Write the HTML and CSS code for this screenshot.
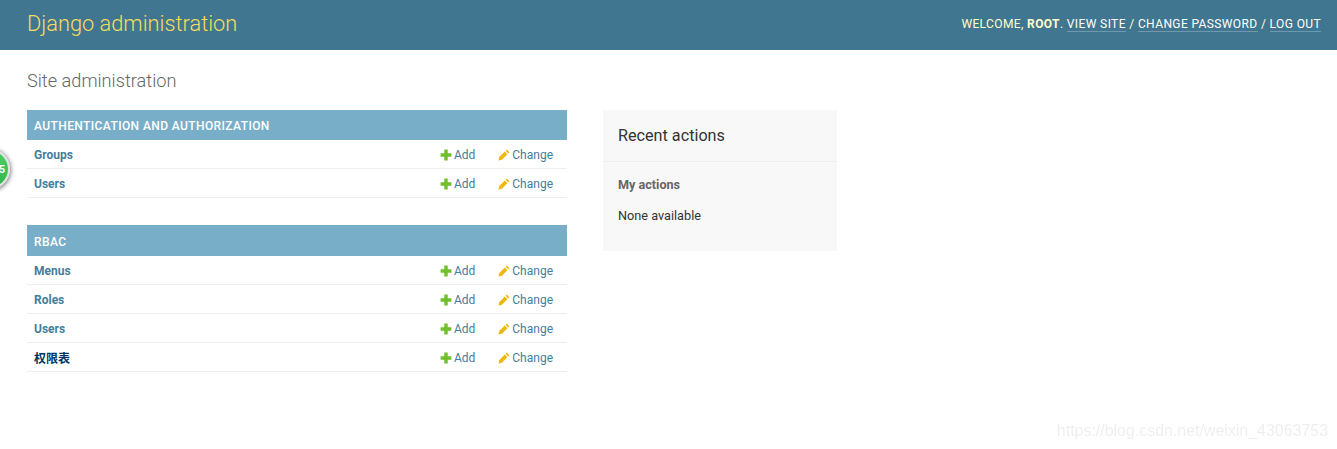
FILE: index.html
```html
<!DOCTYPE html>
<html lang="en">
<head>
    <meta charset="UTF-8">
    <meta name="viewport" content="width=device-width, initial-scale=1.0">
    <title>Site administration | Django site admin</title>
    <link rel="stylesheet" href="styles.css">
</head>
<body>

<svg class="sprites" width="0" height="0">
    <symbol id="plus" viewBox="0 0 12 12">
        <path d="M4.300.6h3.400v3.700h3.700v3.400H7.700v3.700H4.300V7.700H.6V4.300h3.700z" fill="#70bf2b"/>
    </symbol>
    <symbol id="pencil" viewBox="0 0 12 12">
        <path d="M8.800.6l2.600 2.600-1.200 1.200-2.600-2.600zM6.800 2.600l2.600 2.600-5.500 5.500-3.400.8.800-3.400z" fill="#efb80b"/>
    </symbol>
</svg>

<div class="header">
    <h1 class="branding">Django administration</h1>
    <div class="user-tools">
        Welcome, <strong>root</strong>. <a href="#">View site</a> / <a href="#">Change password</a> / <a href="#">Log out</a>
    </div>
</div>

<div class="content">
    <h2 class="page-title">Site administration</h2>
    <div class="columns">
        <div class="main">
            <div class="module">
                <div class="caption">Authentication and Authorization</div>
                <div class="row">
                    <a class="model" href="#">Groups</a>
                    <a class="action add" href="#"><svg class="icon"><use href="#plus"/></svg>Add</a>
                    <a class="action change" href="#"><svg class="icon"><use href="#pencil"/></svg>Change</a>
                </div>
                <div class="row">
                    <a class="model" href="#">Users</a>
                    <a class="action add" href="#"><svg class="icon"><use href="#plus"/></svg>Add</a>
                    <a class="action change" href="#"><svg class="icon"><use href="#pencil"/></svg>Change</a>
                </div>
            </div>
            <div class="module">
                <div class="caption caption-tall">RBAC</div>
                <div class="row">
                    <a class="model" href="#">Menus</a>
                    <a class="action add" href="#"><svg class="icon"><use href="#plus"/></svg>Add</a>
                    <a class="action change" href="#"><svg class="icon"><use href="#pencil"/></svg>Change</a>
                </div>
                <div class="row">
                    <a class="model" href="#">Roles</a>
                    <a class="action add" href="#"><svg class="icon"><use href="#plus"/></svg>Add</a>
                    <a class="action change" href="#"><svg class="icon"><use href="#pencil"/></svg>Change</a>
                </div>
                <div class="row">
                    <a class="model" href="#">Users</a>
                    <a class="action add" href="#"><svg class="icon"><use href="#plus"/></svg>Add</a>
                    <a class="action change" href="#"><svg class="icon"><use href="#pencil"/></svg>Change</a>
                </div>
                <div class="row">
                    <a class="model model-visited" href="#">权限表</a>
                    <a class="action add" href="#"><svg class="icon"><use href="#plus"/></svg>Add</a>
                    <a class="action change" href="#"><svg class="icon"><use href="#pencil"/></svg>Change</a>
                </div>
            </div>
        </div>

        <div class="sidebar">
            <h2 class="sidebar-title">Recent actions</h2>
            <div class="sidebar-body">
                <h3 class="sidebar-subtitle">My actions</h3>
                <p class="sidebar-text">None available</p>
            </div>
        </div>
    </div>
</div>

<div class="float-badge"><span>5</span></div>
<div class="watermark">https://blog.csdn.net/weixin_43063753</div>

</body>
</html>
```

FILE: styles.css
```css
html, body {
    height: 100%;
}
body {
    font-family: Roboto, "Noto Sans CJK SC", sans-serif;
    font-size: 14px;
    color: #333;
    background: #fff;
    margin: 0;
    position: relative;
    overflow: hidden;
}
a {
    text-decoration: none;
}
.sprites {
    position: absolute;
}
.header {
    display: flex;
    justify-content: space-between;
    align-items: center;
    height: 50px;
    padding: 0 16px 3px 27px;
    box-sizing: border-box;
    background: #417690;
    color: #ffc;
}
.branding {
    margin: 0;
    font-size: 21.800px;
    font-weight: 300;
    color: #f5dd5d;
}
.user-tools {
    font-size: 12px;
    letter-spacing: 0.385px;
    text-transform: uppercase;
}
.user-tools a {
    color: #fff;
    border-bottom: 1px solid rgba(255, 255, 255, 0.25);
}
.content {
    padding: 20px 27px 0;
}
.page-title {
    margin: 0 0 18px;
    font-size: 18.200px;
    font-weight: 300;
    line-height: 22px;
    color: #666;
}
.columns {
    display: flex;
    align-items: flex-start;
    gap: 36px;
}
.main {
    width: 540px;
}
.module {
    margin-bottom: 27px;
}
.caption {
    height: 30px;
    line-height: 32px;
    padding-left: 7px;
    font-size: 12px;
    font-weight: 500;
    letter-spacing: 0.4px;
    text-transform: uppercase;
    color: #fff;
    background: #79aec8;
}
.caption-tall {
    height: 31px;
    line-height: 34px;
}
.row {
    display: flex;
    align-items: center;
    height: 29px;
    box-sizing: border-box;
    padding: 1px 14px 0 7px;
    border-bottom: 1px solid #eee;
    font-size: 12px;
}
.model {
    flex: 1;
    font-weight: 700;
    color: #447e9b;
}
.model-visited {
    color: #003366;
}
.action {
    display: flex;
    align-items: center;
    color: #447e9b;
}
.add {
    margin-right: 23px;
}
.icon {
    width: 12px;
    height: 12px;
    margin-right: 2px;
}
.sidebar {
    width: 234px;
    height: 141px;
    background: #f8f8f8;
}
.sidebar-title {
    margin: 0;
    height: 52px;
    box-sizing: border-box;
    line-height: 51px;
    padding-left: 15px;
    font-size: 16.200px;
    font-weight: 400;
    color: #333;
    border-bottom: 1px solid #eee;
}
.sidebar-body {
    padding: 15px 15px 0;
}
.sidebar-subtitle {
    margin: 0 0 15px;
    font-size: 12.600px;
    line-height: 16px;
    font-weight: 700;
    color: #666;
}
.sidebar-text {
    margin: 0;
    font-size: 12.700px;
    line-height: 16px;
}
.float-badge {
    position: absolute;
    left: -35px;
    top: 148px;
    width: 38px;
    height: 38px;
    border-radius: 50%;
    border: 2px solid #e2e2e2;
    background: linear-gradient(#4fd068, #2db64a);
    box-shadow: 0 1px 4px 1px rgba(0, 0, 0, 0.5);
    display: flex;
    align-items: center;
    justify-content: flex-end;
    padding-right: 3px;
    color: #fff;
    font-size: 11px;
    font-weight: 700;
}
.watermark {
    position: absolute;
    right: 9px;
    top: 422px;
    font-family: "Liberation Sans", sans-serif;
    font-size: 15.950px;
    color: rgba(0, 0, 0, 0.07);
    filter: blur(0.4px);
}
```
